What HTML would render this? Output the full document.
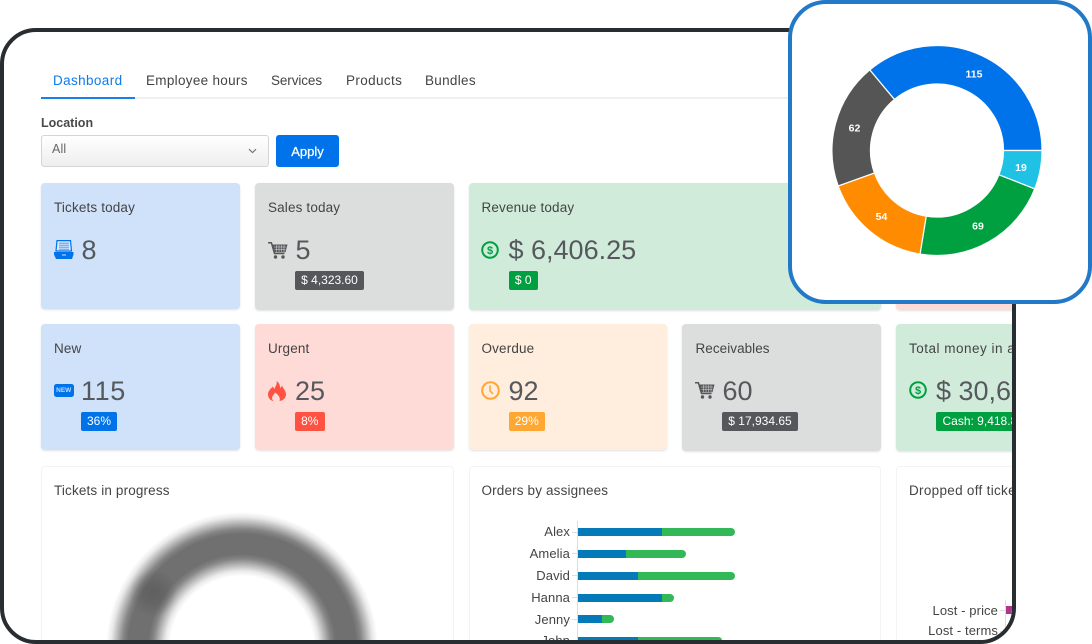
<!DOCTYPE html>
<html><head><meta charset="utf-8"><title>Dashboard</title>
<style>
*{box-sizing:border-box}
html,body{margin:0;padding:0;background:#fff;width:1092px;height:644px;overflow:hidden;font-family:"Liberation Sans",sans-serif}
#frame{position:absolute;left:0;top:28px;width:1016px;height:616px;border:4px solid #282d32;border-radius:36px;overflow:hidden;background:#fff}
#in{position:absolute;left:-4px;top:-32px;width:1016px;height:644px;overflow:hidden}
.t{position:absolute;white-space:nowrap;line-height:20px;height:20px;margin-top:1px;color:#444;font-size:13.5px;letter-spacing:.15px}
.c{position:absolute;border-radius:4px;box-shadow:0 1px 2px rgba(0,0,0,.12)}
.n{position:absolute;white-space:nowrap;line-height:30px;height:30px;color:#55595d;font-size:27px;letter-spacing:0}
.b{position:absolute;height:19px;line-height:19px;color:#fff;font-size:12px;text-align:center;border-radius:2px;white-space:nowrap;overflow:hidden}
.w{position:absolute;background:#fff;border:1px solid #f3f3f3;border-bottom:0;border-radius:4px 4px 0 0}
.l{position:absolute;width:100px;text-align:right;font-size:13px;line-height:18px;height:18px;color:#444;white-space:nowrap;letter-spacing:.1px}
.bar{position:absolute;height:8px;border-radius:0 4px 4px 0;background:#33b857}
.bar i{position:absolute;left:0;top:0;height:8px;background:#047ab8;display:block}
.tick{position:absolute;width:5px;height:1px;background:#ddd}
svg.i{position:absolute;overflow:hidden}
#pop{position:absolute;left:788px;top:0;width:304px;height:304px;background:#fff;border:4px solid #2179c8;border-radius:38px}
</style></head><body>
<div id="frame"><div id="in">
  <div style="position:absolute;left:41px;top:97px;width:975px;height:1.5px;background:#eef0f2"></div>
  <div style="position:absolute;left:41px;top:96.5px;width:94px;height:2px;background:#1a7fe8"></div>
  <div class="t" style="left:53px;top:70px;color:#0f7be6;letter-spacing:.38px">Dashboard</div>
  <div class="t" style="left:146px;top:70px;letter-spacing:.3px">Employee hours</div>
  <div class="t" style="left:271px;top:70px;letter-spacing:-.1px">Services</div>
  <div class="t" style="left:346px;top:70px;letter-spacing:.38px">Products</div>
  <div class="t" style="left:425px;top:70px;letter-spacing:.3px">Bundles</div>

  <div class="t" style="left:41px;top:112px;font-size:12.5px;font-weight:700;color:#4a4a4a;letter-spacing:0">Location</div>
  <div style="position:absolute;left:41px;top:135px;width:228px;height:32px;border:1px solid #d5d5d5;border-radius:3px;background:linear-gradient(#fff,#eeeeee)"></div>
  <div class="t" style="left:52px;top:138px;font-size:12.5px;color:#666">All</div>
  <svg class="i" style="left:248px;top:148px" width="9" height="6" viewBox="0 0 9 6"><path d="M1 1.2 4.5 4.6 8 1.2" fill="none" stroke="#777" stroke-width="1.2"/></svg>
  <div style="position:absolute;left:276px;top:135px;width:63px;height:32px;background:#0073ea;border-radius:3px;color:#fff;text-align:center;line-height:33px;font-size:13px;-webkit-text-stroke:.25px #fff">Apply</div>

  <!-- row 1 -->
  <div class="c" style="left:41px;top:183px;width:199px;height:126px;background:#cfe2fa"></div>
  <div class="t" style="left:54px;top:197px">Tickets today</div>
  <svg class="i" style="left:54px;top:240px" width="20" height="20" viewBox="0 0 20 20">
    <path d="M3 0.6H16.5L17.5 11H2Z" fill="#dbe9fb" stroke="#0073ea" stroke-width="1.2"/>
    <path d="M5 3.2H15M5 5.200H15M5 7.200H15M5 9.200H15" stroke="#3f93ee" stroke-width=".9"/>
    <path d="M0 12H19.500V14.500L18 19H2L0 14.500Z" fill="#0073ea"/>
    <path d="M8 15H12" stroke="#cfe2fa" stroke-width="1"/>
  </svg>
  <div class="n" style="left:81.500px;top:235px">8</div>

  <div class="c" style="left:255px;top:183px;width:199px;height:127px;background:#dcdedd"></div>
  <div class="t" style="left:268px;top:197px">Sales today</div>
  <svg class="i" style="left:267.500px;top:242px" width="20" height="18" viewBox="0 0 20 18">
    <path d="M0 0.8H3.400L6.500 11.500H16.500" fill="none" stroke="#54585b" stroke-width="1.500"/>
    <path d="M3.500 2.500H19.500L17.500 10.200H6Z" fill="#54585b"/>
    <path d="M6 5H18M6.500 7.500H17.500M8.500 3V10M11 3V10M13.500 3V10M16 3V10" stroke="#dcdedd" stroke-width=".5"/>
    <circle cx="7.500" cy="15" r="1.700" fill="#54585b"/><circle cx="15" cy="15" r="1.700" fill="#54585b"/>
  </svg>
  <div class="n" style="left:295.500px;top:235px">5</div>
  <div class="b" style="left:295px;top:271px;width:69px;background:#54585b">$ 4,323.60</div>

  <div class="c" style="left:469px;top:183px;width:412px;height:127px;background:#d1ebdb"></div>
  <div class="t" style="left:481.500px;top:197px">Revenue today</div>
  <svg class="i" style="left:481px;top:241px" width="18" height="18" viewBox="0 0 18 18">
    <circle cx="9" cy="9" r="7.800" fill="none" stroke="#00a040" stroke-width="2"/>
    <text x="9" y="12.800" text-anchor="middle" font-size="11" font-weight="700" fill="#00a040" font-family="Liberation Sans">$</text>
  </svg>
  <div class="n" style="left:508.500px;top:235px">$ 6,406.25</div>
  <div class="b" style="left:508.500px;top:271px;width:29.500px;background:#00a040">$ 0</div>

  <div class="c" style="left:896px;top:183px;width:120px;height:127px;background:#ffdbd7"></div>

  <!-- row 2 -->
  <div class="c" style="left:41px;top:324px;width:199px;height:126px;background:#cfe2fa"></div>
  <div class="t" style="left:54px;top:338px">New</div>
  <div style="position:absolute;left:54px;top:384px;width:19.500px;height:13px;background:#0073ea;border-radius:2.500px;color:#bcdcff;font-size:6.500px;font-weight:700;line-height:13px;text-align:center">NEW</div>
  <div class="n" style="left:81px;top:376px;letter-spacing:.6px">115</div>
  <div class="b" style="left:81px;top:412px;width:36px;background:#0073ea">36%</div>

  <div class="c" style="left:255px;top:324px;width:199px;height:126px;background:#ffdbd7"></div>
  <div class="t" style="left:268px;top:338px">Urgent</div>
  <svg class="i" style="left:268px;top:381px" width="18" height="20" viewBox="0 0 18 20">
    <path d="M8.500 0C9.500 3.500 7 5.500 6.500 8 5.800 7.300 5.300 6.500 5 5.500 2 8 0 10.500 0 13.500 0 17 3 20 5.500 20 4 18.500 3.500 16.500 5 14.500 5.500 13.800 6.500 12.800 7 11.500 9.500 13 13 16.500 11.500 20 15.500 19.500 18 16.500 18 13.500 18 9.500 15 7.500 14 4.500 13.500 5.500 13 6.500 12 7 12.200 4 11 1.500 8.500 0Z" fill="#ff5242"/>
  </svg>
  <div class="n" style="left:295px;top:376px">25</div>
  <div class="b" style="left:294.500px;top:412px;width:30.500px;background:#ff5242">8%</div>

  <div class="c" style="left:469px;top:324px;width:198px;height:126px;background:#ffeddd"></div>
  <div class="t" style="left:481.500px;top:338px">Overdue</div>
  <svg class="i" style="left:481px;top:381px" width="19" height="19" viewBox="0 0 19 19">
    <circle cx="9.500" cy="9.500" r="8.300" fill="none" stroke="#ffa733" stroke-width="2"/>
    <path d="M9 4.500V9.800L12 13" fill="none" stroke="#ffa733" stroke-width="1.600"/>
  </svg>
  <div class="n" style="left:508.500px;top:376px">92</div>
  <div class="b" style="left:508.500px;top:412px;width:36.500px;background:#ffa733">29%</div>

  <div class="c" style="left:682px;top:324px;width:199px;height:127px;background:#dcdedd"></div>
  <div class="t" style="left:695.500px;top:338px;letter-spacing:.05px">Receivables</div>
  <svg class="i" style="left:695px;top:382px" width="20" height="18" viewBox="0 0 20 18">
    <path d="M0 0.8H3.400L6.500 11.500H16.500" fill="none" stroke="#54585b" stroke-width="1.500"/>
    <path d="M3.500 2.500H19.500L17.500 10.200H6Z" fill="#54585b"/>
    <path d="M6 5H18M6.500 7.500H17.500M8.500 3V10M11 3V10M13.500 3V10M16 3V10" stroke="#dcdedd" stroke-width=".5"/>
    <circle cx="7.500" cy="15" r="1.700" fill="#54585b"/><circle cx="15" cy="15" r="1.700" fill="#54585b"/>
  </svg>
  <div class="n" style="left:722.500px;top:376px">60</div>
  <div class="b" style="left:722px;top:412px;width:76px;background:#54585b">$ 17,934.65</div>

  <div class="c" style="left:896px;top:324px;width:120px;height:127px;background:#d1ebdb"></div>
  <div class="t" style="left:909px;top:338px;letter-spacing:.5px">Total money in accounts</div>
  <svg class="i" style="left:908.500px;top:381px" width="18" height="18" viewBox="0 0 18 18">
    <circle cx="9" cy="9" r="7.800" fill="none" stroke="#00a040" stroke-width="2"/>
    <text x="9" y="12.800" text-anchor="middle" font-size="11" font-weight="700" fill="#00a040" font-family="Liberation Sans">$</text>
  </svg>
  <div class="n" style="left:936px;top:376px">$ 30,625.40</div>
  <div class="b" style="left:936px;top:412px;width:80px;background:#00a040;text-align:left;padding-left:6.500px;border-radius:2px 0 0 2px">Cash: 9,418.85</div>

  <!-- row 3 -->
  <div class="w" style="left:41px;top:466px;width:413px;height:178px"></div>
  <div class="t" style="left:54px;top:480px">Tickets in progress</div>
  <div style="position:absolute;left:60px;top:500px;width:370px;height:144px;background:radial-gradient(circle at 93px 93px,rgba(70,70,70,.4) 0,rgba(70,70,70,.28) 10px,rgba(70,70,70,0) 24px),radial-gradient(circle at 182px 148px,rgba(112,112,112,0) 72px,rgba(112,112,112,.15) 77px,rgba(112,112,112,.5) 83px,rgba(112,112,112,.85) 89px,#707070 94px,#707070 114px,rgba(112,112,112,.85) 119px,rgba(112,112,112,.5) 125px,rgba(112,112,112,.15) 131px,rgba(112,112,112,0) 136px)"></div>

  <div class="w" style="left:469px;top:466px;width:412px;height:178px"></div>
  <div class="t" style="left:481.500px;top:480px">Orders by assignees</div>
  <div style="position:absolute;left:577px;top:521px;width:1px;height:123px;background:#ddd"></div>
  <div class="l" style="left:470px;top:523px">Alex</div><div class="tick" style="left:572px;top:532px"></div>
  <div class="l" style="left:470px;top:545px">Amelia</div><div class="tick" style="left:572px;top:553px"></div>
  <div class="l" style="left:470px;top:566.500px">David</div><div class="tick" style="left:572px;top:575px"></div>
  <div class="l" style="left:470px;top:588.500px">Hanna</div><div class="tick" style="left:572px;top:597px"></div>
  <div class="l" style="left:470px;top:610.500px">Jenny</div><div class="tick" style="left:572px;top:619px"></div>
  <div class="l" style="left:470px;top:632px;height:12px;overflow:hidden">John</div>
  <div class="bar" style="left:578px;top:528px;width:157px"><i style="width:84px"></i></div>
  <div class="bar" style="left:578px;top:549.500px;width:108px"><i style="width:48px"></i></div>
  <div class="bar" style="left:578px;top:571.500px;width:157px"><i style="width:60px"></i></div>
  <div class="bar" style="left:578px;top:593.500px;width:96px"><i style="width:84px"></i></div>
  <div class="bar" style="left:578px;top:615px;width:36px"><i style="width:24px"></i></div>
  <div class="bar" style="left:578px;top:636.500px;width:144px;height:7.500px"><i style="width:60px;height:7.500px"></i></div>

  <div class="w" style="left:896px;top:466px;width:120px;height:178px"></div>
  <div class="t" style="left:909px;top:480px;letter-spacing:.3px">Dropped off tickets</div>
  <div style="position:absolute;left:1005px;top:600px;width:1px;height:44px;background:#ddd"></div>
  <div class="l" style="left:898px;top:601.500px">Lost - price</div><div class="tick" style="left:1000px;top:610px"></div>
  <div class="l" style="left:898px;top:622px">Lost - terms</div><div class="tick" style="left:1000px;top:631px"></div>
  <div style="position:absolute;left:1006px;top:606px;width:10px;height:8px;background:#b0358a"></div>
</div></div>

<div id="pop"></div>
<svg class="i" style="left:788px;top:0" width="304" height="304" viewBox="788 0 304 304">
  <g stroke="#fff" stroke-width="1.200">
    <path d="M869.740 69.880A105 105 0 0 1 1042 150.500H1003.500A66.500 66.500 0 0 0 894.400 99.440Z" fill="#0073ea"/>
    <path d="M1042 150.500A105 105 0 0 1 1034.730 188.880L998.900 174.810A66.500 66.500 0 0 0 1003.500 150.500Z" fill="#1fc1e4"/>
    <path d="M1034.730 188.880A105 105 0 0 1 920.010 254.110L926.240 216.120A66.500 66.500 0 0 0 998.900 174.810Z" fill="#00a040"/>
    <path d="M920.010 254.110A105 105 0 0 1 838.170 185.980L874.410 172.970A66.500 66.500 0 0 0 926.240 216.120Z" fill="#ff8c00"/>
    <path d="M838.170 185.980A105 105 0 0 1 869.740 69.880L894.400 99.440A66.500 66.500 0 0 0 874.410 172.970Z" fill="#555555"/>
  </g>
  <g fill="#fff" font-family="Liberation Sans" font-size="10.500" font-weight="700" text-anchor="middle">
    <text x="974" y="77.500">115</text>
    <text x="1021" y="171">19</text>
    <text x="978" y="229.500">69</text>
    <text x="881.500" y="220">54</text>
    <text x="854.500" y="131.500">62</text>
  </g>
</svg>
</body></html>
